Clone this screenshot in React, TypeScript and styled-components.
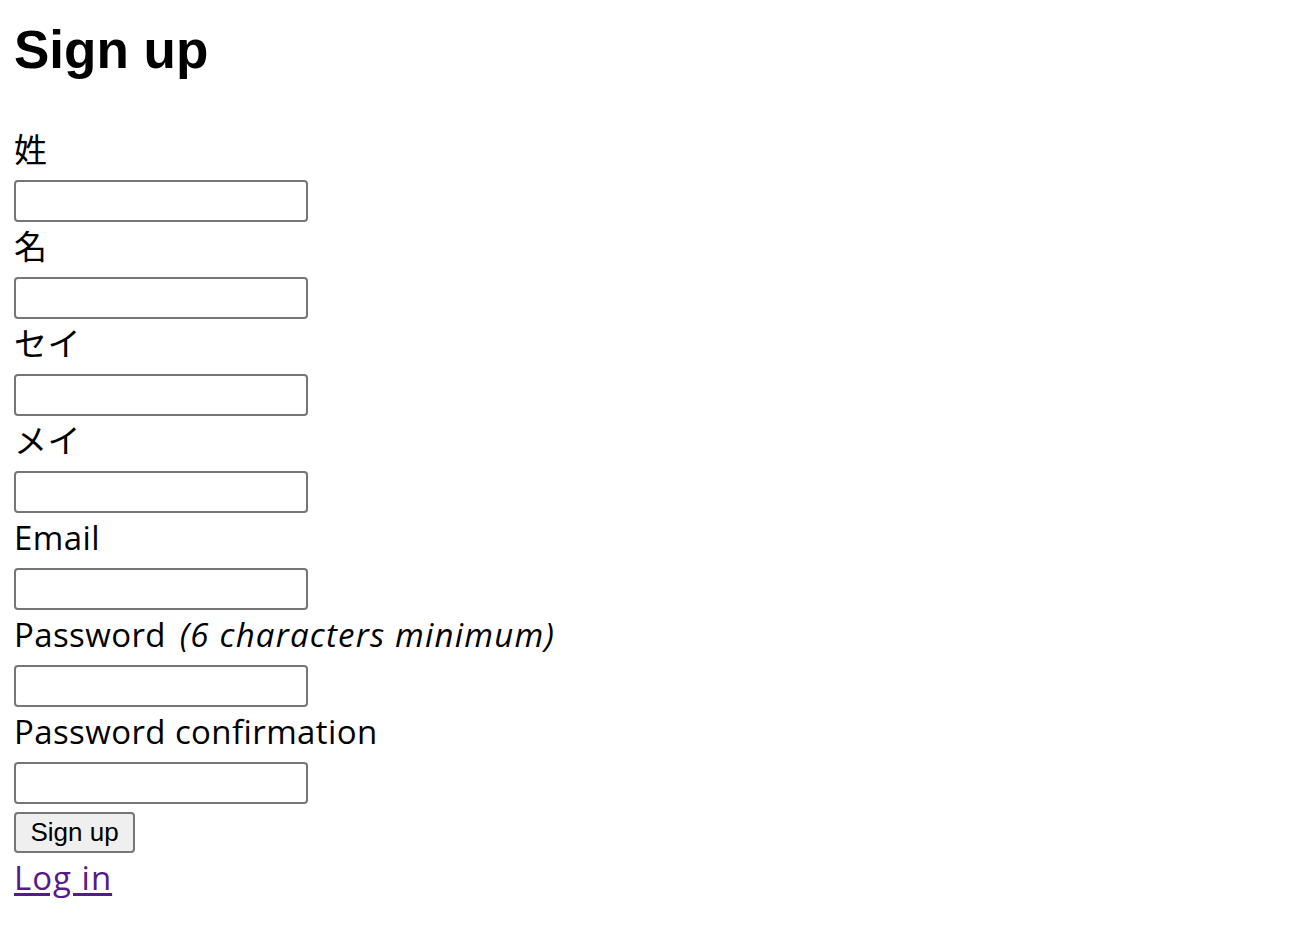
import styled, { createGlobalStyle } from "styled-components";

const GlobalStyle = createGlobalStyle`
  html, body {
    margin: 0;
    padding: 0;
    background: #fff;
    color: #000;
  }
`;

const Page = styled.div`
  padding: 23px 14px 0;
  font-family: "Open Sans", "Noto Sans CJK JP", sans-serif;
  font-size: 33px;
  letter-spacing: 0.4px;
`;

const Title = styled.h1`
  margin: 0 0 53px;
  font-family: "Liberation Sans", Arial, sans-serif;
  font-size: 53px;
  line-height: 53px;
  font-weight: 700;
  letter-spacing: 0;
`;

const Form = styled.form`
  display: flex;
  flex-direction: column;
  align-items: flex-start;
`;

const Field = styled.div`
  height: 97px;
`;

const Label = styled.label`
  display: block;
  height: 42px;
  line-height: 42px;
  white-space: nowrap;
`;

const Hint = styled.em`
  font-style: italic;
  margin-left: 4px;
  letter-spacing: 1.2px;
`;

const Input = styled.input`
  display: block;
  box-sizing: border-box;
  width: 294px;
  height: 42px;
  margin-top: 9px;
  border: 2px solid #767676;
  border-radius: 4px;
  background: #fff;
  font-size: 24px;
  padding: 2px 4px;
`;

const Submit = styled.button`
  box-sizing: border-box;
  width: 121px;
  height: 41px;
  margin-top: 4px;
  padding: 0;
  border: 2px solid #767676;
  border-radius: 4px;
  background: #efefef;
  color: #000;
  font-family: "Liberation Sans", Arial, sans-serif;
  font-size: 26px;
  letter-spacing: 0;
`;

const Links = styled.div`
  margin-top: 4px;
  line-height: 42px;
`;

const LogIn = styled.a`
  color: #551a8b;
  letter-spacing: 1px;
  text-decoration: underline;
  text-underline-offset: 3px;
`;

const fields = [
  { id: "last_name", label: "姓", type: "text" },
  { id: "first_name", label: "名", type: "text" },
  { id: "last_name_kana", label: "セイ", type: "text" },
  { id: "first_name_kana", label: "メイ", type: "text" },
  { id: "email", label: "Email", type: "email" },
  { id: "password", label: "Password", type: "password", hint: "(6 characters minimum)" },
  { id: "password_confirmation", label: "Password confirmation", type: "password" },
];

export default function App() {
  return (
    <Page>
      <GlobalStyle />
      <Title>Sign up</Title>
      <Form onSubmit={(e) => e.preventDefault()}>
        {fields.map((f) => (
          <Field key={f.id}>
            <Label htmlFor={f.id}>
              {f.label}
              {f.hint && <Hint> {f.hint}</Hint>}
            </Label>
            <Input id={f.id} type={f.type} />
          </Field>
        ))}
        <Submit type="submit">Sign up</Submit>
      </Form>
      <Links>
        <LogIn href="#">Log in</LogIn>
      </Links>
    </Page>
  );
}
